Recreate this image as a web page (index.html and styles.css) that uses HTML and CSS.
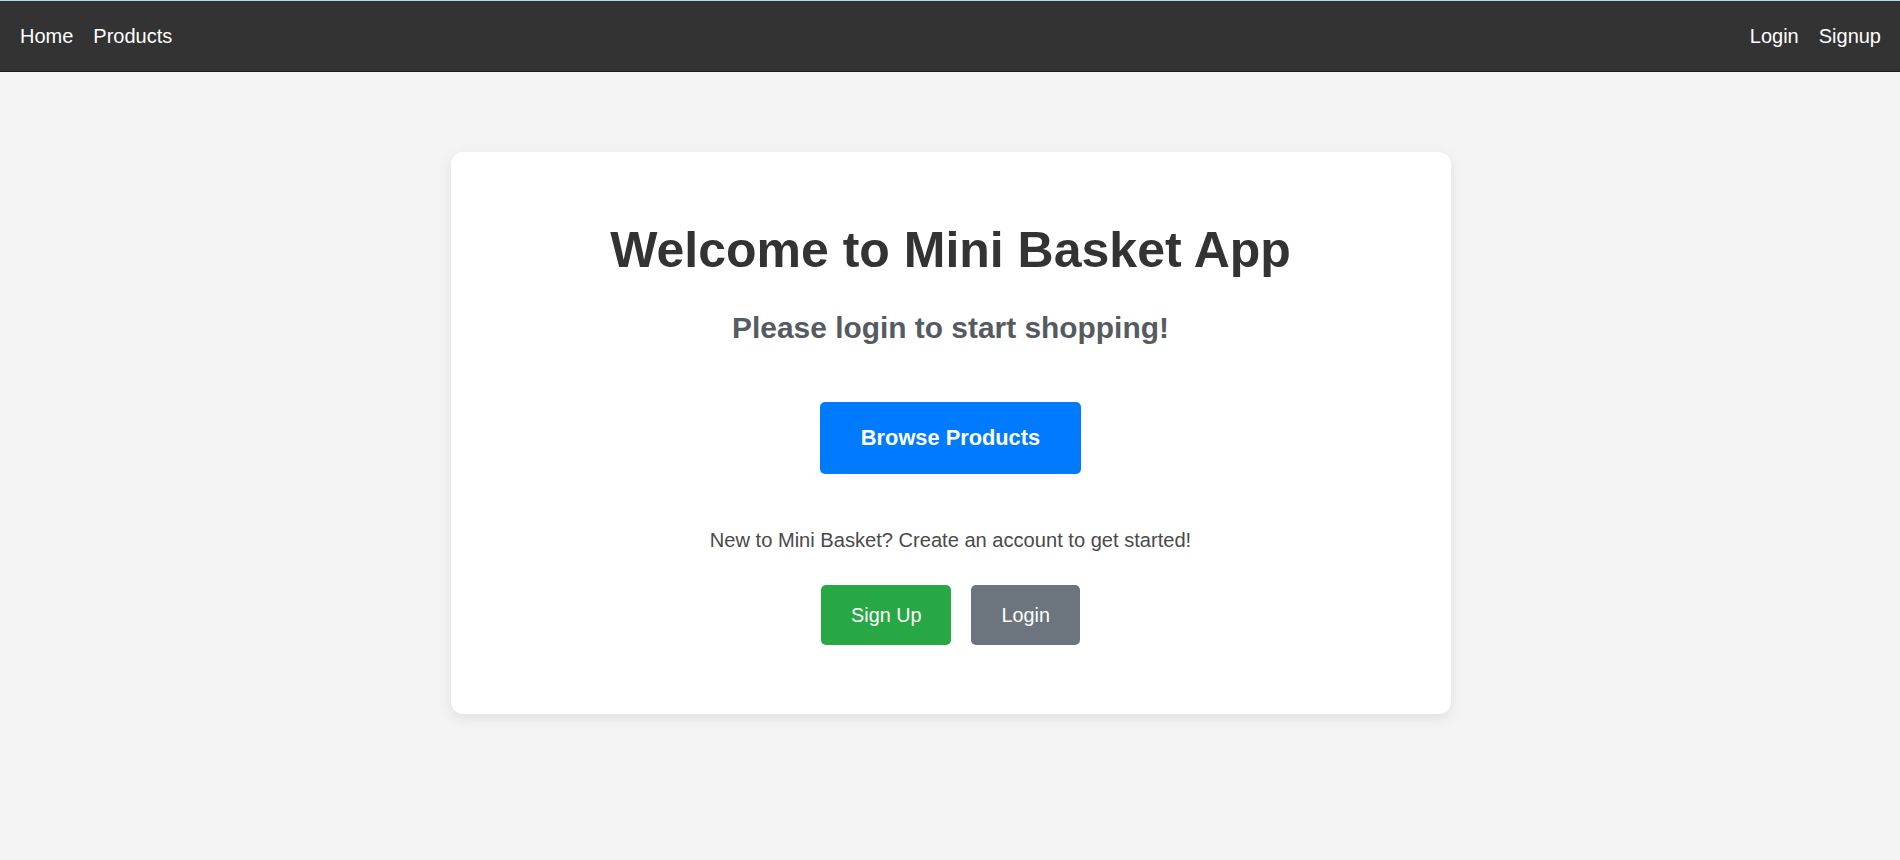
FILE: index.html
```html
<!DOCTYPE html>
<html lang="en">
<head>
<meta charset="utf-8">
<title>Mini Basket App</title>
<link rel="stylesheet" href="styles.css">
</head>
<body>
<nav class="navbar">
  <div class="nav-group">
    <a class="nav-link" href="#">Home</a>
    <a class="nav-link" href="#">Products</a>
  </div>
  <div class="nav-group">
    <a class="nav-link" href="#">Login</a>
    <a class="nav-link" href="#">Signup</a>
  </div>
</nav>
<main class="main">
  <section class="card">
    <h1 class="title">Welcome to Mini Basket App</h1>
    <h2 class="subtitle">Please login to start shopping!</h2>
    <a class="btn btn-primary" href="#">Browse Products</a>
    <p class="note">New to Mini Basket? Create an account to get started!</p>
    <div class="btn-row">
      <a class="btn btn-small btn-success" href="#">Sign Up</a>
      <a class="btn btn-small btn-secondary" href="#">Login</a>
    </div>
  </section>
</main>
</body>
</html>
```

FILE: styles.css
```css
* {
  box-sizing: border-box;
}

html, body {
  margin: 0;
  padding: 0;
}

body {
  background: #f4f4f4;
  font-family: "Liberation Sans", Arial, sans-serif;
  color: #333;
  min-height: 860px;
}

.navbar {
  display: flex;
  justify-content: space-between;
  align-items: center;
  height: 72px;
  padding: 0 19px 0 20px;
  background: #333;
  border-top: 1px solid #b4dde3;
  border-bottom: 1px solid #1c1c1c;
}

.nav-group {
  display: flex;
  gap: 20px;
}

.nav-link {
  color: #fff;
  text-decoration: none;
  font-size: 20px;
  line-height: 24px;
}

.main {
  display: flex;
  justify-content: center;
  padding-top: 80px;
}

.card {
  width: 1000px;
  margin-left: 1px;
  background: #fff;
  border-radius: 12px;
  box-shadow: 0 4px 14px rgba(0, 0, 0, 0.09);
  padding: 68px 40px 69px;
  display: flex;
  flex-direction: column;
  align-items: center;
  text-align: center;
}

.title {
  margin: 0;
  font-size: 50px;
  line-height: 60px;
  font-weight: 700;
  color: #333;
}

.subtitle {
  margin: 31px 0 0;
  font-size: 29.9px;
  line-height: 34px;
  font-weight: 700;
  color: #555b61;
}

.btn {
  display: inline-block;
  text-decoration: none;
  color: #fff;
  border-radius: 5px;
}

.btn-primary {
  margin-top: 57px;
  background: #007bff;
  font-size: 21.8px;
  font-weight: 700;
  line-height: 26px;
  padding: 23px 41px;
}

.note {
  margin: 54px 0 0;
  font-size: 20.1px;
  line-height: 24px;
  color: #4a4a4a;
}

.btn-row {
  margin-top: 33px;
  display: flex;
  gap: 20px;
}

.btn-small {
  font-size: 19.8px;
  line-height: 24px;
  padding: 18px 30px;
}

.btn-success {
  background: #28a745;
}

.btn-secondary {
  background: #6c757d;
}
```
